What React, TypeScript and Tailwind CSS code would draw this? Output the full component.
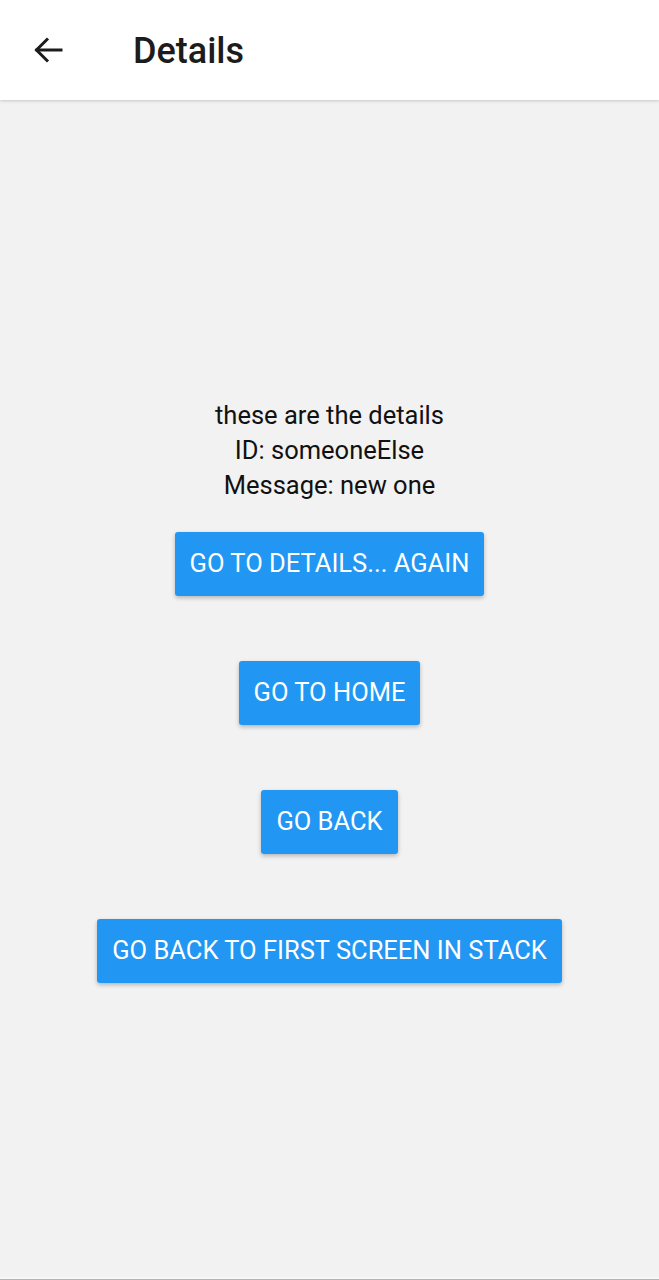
export default function App() {
  const buttons = ['Go to Details... again', 'Go to Home', 'Go back', 'Go back to first screen in stack'];

  return (
    <div className="h-[1280px] w-full bg-[#f2f2f2] flex flex-col font-['Roboto',sans-serif]">
      <div className="h-[100px] bg-white flex items-center shadow-[0_1px_3px_rgba(0,0,0,0.18)] z-10 shrink-0">
        <div className="w-[133px] pl-[33px] flex items-center">
          <svg width="30" height="30" viewBox="0 0 30 30" fill="none" stroke="#1c1c1c" strokeWidth="3" strokeLinecap="square">
            <path d="M28 15H4" />
            <path d="M15 3.5L3.5 15L15 26.5" strokeLinecap="butt" />
          </svg>
        </div>
        <h1 className="text-[36px] font-medium text-[#1c1c1c] leading-none pt-[1px]">Details</h1>
      </div>

      <div className="flex-1 flex flex-col items-center justify-center pt-[3px]">
        <div className="text-center text-[25.5px] leading-[35px] text-[#111]">
          <p>these are the details</p>
          <p>ID: someoneElse</p>
          <p>Message: new one</p>
        </div>
        <div className="flex flex-col items-center gap-[65px] mt-[29px]">
          {buttons.map((b) => (
            <button
              key={b}
              className="h-[64px] px-[15px] bg-[#2196f3] text-white uppercase text-[25.5px] rounded-[3px] shadow-[0_2px_4px_rgba(0,0,0,0.25)]"
            >
              {b}
            </button>
          ))}
        </div>
      </div>

      <div className="h-[3px] bg-[#f7f7f7] border-b border-[#b4b4b4] shrink-0" />
    </div>
  );
}
